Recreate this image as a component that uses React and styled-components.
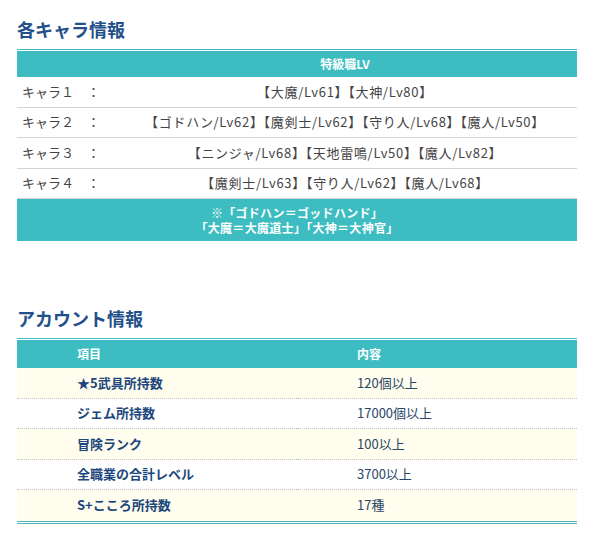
import React from "react";
import styled, { createGlobalStyle } from "styled-components";

const Global = createGlobalStyle`
  html, body { margin: 0; padding: 0; background: #fff; }
  body {
    font-family: "Noto Sans CJK JP", "Noto Sans", sans-serif;
    color: #333;
  }
`;

const Page = styled.div`
  padding: 0 12px 30px 17px;
  width: 560px;
`;

const Section = styled.section`
  margin-top: ${(p) => p.$top}px;
`;

const Title = styled.h2`
  margin: 0 0 7px;
  font-size: 18px;
  line-height: 26px;
  font-weight: 700;
  color: #23508a;
`;

const Table = styled.table`
  width: 100%;
  border-collapse: separate;
  border-spacing: 0;
  border-top: 1px solid #3dbdc1;
  padding-top: 1px;
  ${(p) => p.$double && `border-bottom: 3px double #4fb9bd;`}
`;

const HeadCell = styled.th`
  background: #3dbdc1;
  color: #fff;
  font-size: 12px;
  font-weight: 700;
  height: ${(p) => p.$h}px;
  padding: 0 0 0 ${(p) => p.$pl || 0}px;
  text-align: ${(p) => p.$align || "left"};
  width: ${(p) => p.$w || "auto"};
  box-sizing: border-box;
  vertical-align: middle;
  line-height: 16px;
`;

const CharaRow = styled.tr`
  td { border-bottom: 1px solid #d4d4d4; }
  &:last-child td { border-bottom: none; }
`;

const LabelCell = styled.td`
  width: 86px;
  height: 30.5px;
  padding: 0 0 0 5px;
  box-sizing: border-box;
  font-size: 13px;
  color: #444;
  white-space: pre;
  line-height: 18px;
`;

const JobCell = styled.td`
  text-align: center;
  font-size: 13px;
  color: #444;
  line-height: 18px;
  letter-spacing: 0.7px;
`;

const NoteCell = styled.td`
  background: #3dbdc1;
  color: #fff;
  font-size: 12px;
  font-weight: 700;
  text-align: center;
  line-height: 15px;
  height: 42px;
  padding: 0;
  letter-spacing: 0.3px;
`;

const AccRow = styled.tr`
  background: ${(p) => (p.$odd ? "#fffded" : "#fff")};
  td { border-bottom: 1px dotted #c4c4c4; }
  &:last-child td { border-bottom: none; }
`;

const AccCell = styled.td`
  width: 50%;
  height: 30.5px;
  padding: 0 0 0 60px;
  box-sizing: border-box;
  font-size: 13px;
  line-height: 18px;
  font-weight: ${(p) => (p.$bold ? 700 : 400)};
  color: ${(p) => (p.$bold ? "#1d477c" : "#2a4666")};
`;

const charas = [
  ["キャラ１", "【大魔/Lv61】【大神/Lv80】"],
  ["キャラ２", "【ゴドハン/Lv62】【魔剣士/Lv62】【守り人/Lv68】【魔人/Lv50】"],
  ["キャラ３", "【ニンジャ/Lv68】【天地雷鳴/Lv50】【魔人/Lv82】"],
  ["キャラ４", "【魔剣士/Lv63】【守り人/Lv62】【魔人/Lv68】"],
];

const account = [
  ["★5武具所持数", "120個以上"],
  ["ジェム所持数", "17000個以上"],
  ["冒険ランク", "100以上"],
  ["全職業の合計レベル", "3700以上"],
  ["S+こころ所持数", "17種"],
];

export default function App() {
  return (
    <>
      <Global />
      <Page>
        <Section $top={16}>
          <Title>各キャラ情報</Title>
          <Table>
            <thead>
              <tr>
                <HeadCell $h={26} $w="86px" />
                <HeadCell $h={26} $align="center">特級職LV</HeadCell>
              </tr>
            </thead>
            <tbody>
              {charas.map(([name, jobs]) => (
                <CharaRow key={name}>
                  <LabelCell>{name + "　：　"}</LabelCell>
                  <JobCell>{jobs}</JobCell>
                </CharaRow>
              ))}
              <tr>
                <NoteCell colSpan={2}>
                  ※「ゴドハン＝ゴッドハンド」
                  <br />
                  「大魔＝大魔道士」「大神＝大神官」
                </NoteCell>
              </tr>
            </tbody>
          </Table>
        </Section>
        <Section $top={64}>
          <Title>アカウント情報</Title>
          <Table $double>
            <thead>
              <tr>
                <HeadCell $h={28} $pl={60} $w="50%">項目</HeadCell>
                <HeadCell $h={28} $pl={60} $w="50%">内容</HeadCell>
              </tr>
            </thead>
            <tbody>
              {account.map(([k, v], i) => (
                <AccRow key={k} $odd={i % 2 === 0}>
                  <AccCell $bold>{k}</AccCell>
                  <AccCell>{v}</AccCell>
                </AccRow>
              ))}
            </tbody>
          </Table>
        </Section>
      </Page>
    </>
  );
}
